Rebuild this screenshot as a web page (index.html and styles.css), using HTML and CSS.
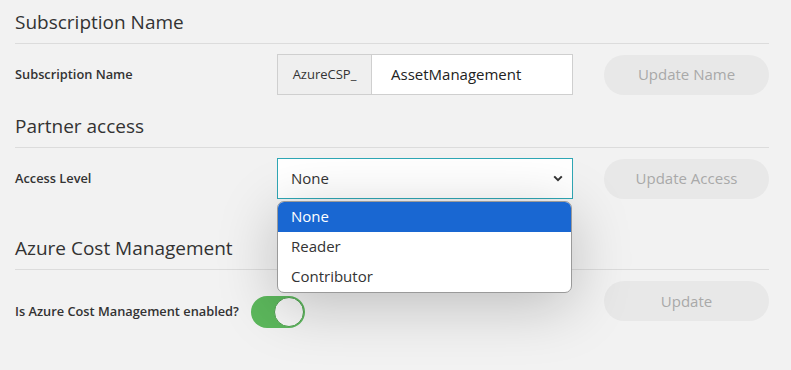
FILE: index.html
```html
<!DOCTYPE html>
<html lang="en">

<head>
    <meta charset="UTF-8">
    <meta name="viewport" content="width=device-width, initial-scale=1.0">
    <title>Subscription Settings</title>
    <link rel="stylesheet" href="styles.css">
</head>

<body>
    <div class="page">
        <section class="section first">
            <h2>Subscription Name</h2>
            <div class="row">
                <label class="row-label">Subscription Name</label>
                <div class="input-group">
                    <span class="prefix">AzureCSP_</span>
                    <span class="input-value">AssetManagement</span>
                </div>
                <button class="action-btn" disabled>Update Name</button>
            </div>
        </section>

        <section class="section second">
            <h2>Partner access</h2>
            <div class="row">
                <label class="row-label">Access Level</label>
                <div class="select-wrap">
                    <div class="select">
                        <span>None</span>
                        <svg class="chevron" width="10" height="7" viewBox="0 0 10 7">
                            <path d="M1.2 1.4 L5 5.2 L8.8 1.4" fill="none" stroke="#333" stroke-width="2" />
                        </svg>
                    </div>
                    <ul class="dropdown">
                        <li class="selected">None</li>
                        <li>Reader</li>
                        <li>Contributor</li>
                    </ul>
                </div>
                <button class="action-btn" disabled>Update Access</button>
            </div>
        </section>

        <section class="section third">
            <h2>Azure Cost Management</h2>
            <div class="row toggle-row">
                <div class="toggle-group">
                    <label class="toggle-label">Is Azure Cost Management enabled?</label>
                    <span class="toggle"><span class="knob"></span></span>
                </div>
                <button class="action-btn" disabled>Update</button>
            </div>
        </section>
    </div>
</body>

</html>
```

FILE: styles.css
```css
:root {
    --border-color: #dcdcdc;
    --text-color: #333;
    --btn-bg: #e8e8e8;
    --btn-text: #a9a9a9;
    --focus-color: #2fa7b5;
    --highlight: #1967d2;
    --green: #5cb85c;
}

body {
    font-family: 'Open Sans', 'Liberation Sans', sans-serif;
    color: var(--text-color);
    background-color: #f2f2f2;
    margin: 0;
    padding: 0;
}

.page {
    min-height: 100vh;
    box-sizing: border-box;
    padding: 0 22px 40px 15px;
}

.section h2 {
    font-size: 19px;
    font-weight: 400;
    line-height: 24px;
    margin: 0;
    padding-bottom: 9px;
    border-bottom: 1px solid var(--border-color);
}

.first h2 {
    margin-top: 10px;
}

.second h2 {
    margin-top: 19px;
}

.third h2 {
    margin-top: 37px;
}

.row {
    display: flex;
    align-items: center;
    margin-top: 10px;
    height: 41px;
}

.row-label {
    width: 262px;
    font-size: 12.8px;
    font-weight: 600;
    padding-bottom: 2px;
}

.input-group {
    display: flex;
    width: 296px;
    height: 41px;
    box-sizing: border-box;
    border: 1px solid #cfcfcf;
    background: white;
}

.prefix {
    display: flex;
    align-items: center;
    justify-content: center;
    width: 94px;
    padding-bottom: 1px;
    box-sizing: border-box;
    background: #efefef;
    border-right: 1px solid #cfcfcf;
    font-size: 13px;
}

.input-value {
    display: flex;
    align-items: center;
    padding: 0 0 1px 19px;
    font-size: 15px;
    color: #222;
}

.action-btn {
    margin-left: auto;
    width: 165px;
    height: 40px;
    padding-bottom: 2px;
    border: none;
    border-radius: 20px;
    background: var(--btn-bg);
    color: var(--btn-text);
    font-family: inherit;
    font-size: 15px;
}

.select-wrap {
    position: relative;
    width: 296px;
}

.select {
    display: flex;
    align-items: center;
    justify-content: space-between;
    height: 41px;
    box-sizing: border-box;
    padding: 0 9px 1px 13px;
    border: 1px solid var(--focus-color);
    background: white;
    font-size: 15px;
}

.dropdown {
    position: absolute;
    top: 43px;
    left: 0;
    width: 295px;
    margin: 0;
    padding: 0;
    list-style: none;
    background: white;
    border-radius: 7px;
    border: 1px solid #9a9a9a;
    box-sizing: border-box;
    overflow: hidden;
    box-shadow: 0 12px 60px rgba(0, 0, 0, 0.22);
    z-index: 2;
}

.dropdown li {
    height: 30px;
    line-height: 28px;
    padding-left: 13px;
    font-size: 15px;
}

.dropdown li.selected {
    background: var(--highlight);
    color: white;
}

.toggle-row {
    align-items: flex-start;
    height: auto;
}

.toggle-group {
    display: flex;
    align-items: center;
    margin-top: 16px;
}

.toggle-label {
    font-size: 12.8px;
    font-weight: 600;
    white-space: nowrap;
    margin-right: 12px;
    padding-bottom: 2px;
}

.toggle {
    position: relative;
    display: inline-block;
    width: 54px;
    height: 32px;
    border-radius: 16px;
    background: var(--green);
}

.knob {
    position: absolute;
    top: 1px;
    right: 1px;
    width: 30px;
    height: 30px;
    box-sizing: border-box;
    border-radius: 50%;
    background: #f6f6f6;
    border: 1px solid #4e9f4e;
}

.toggle-row .action-btn {
    margin-top: 1px;
}
```
